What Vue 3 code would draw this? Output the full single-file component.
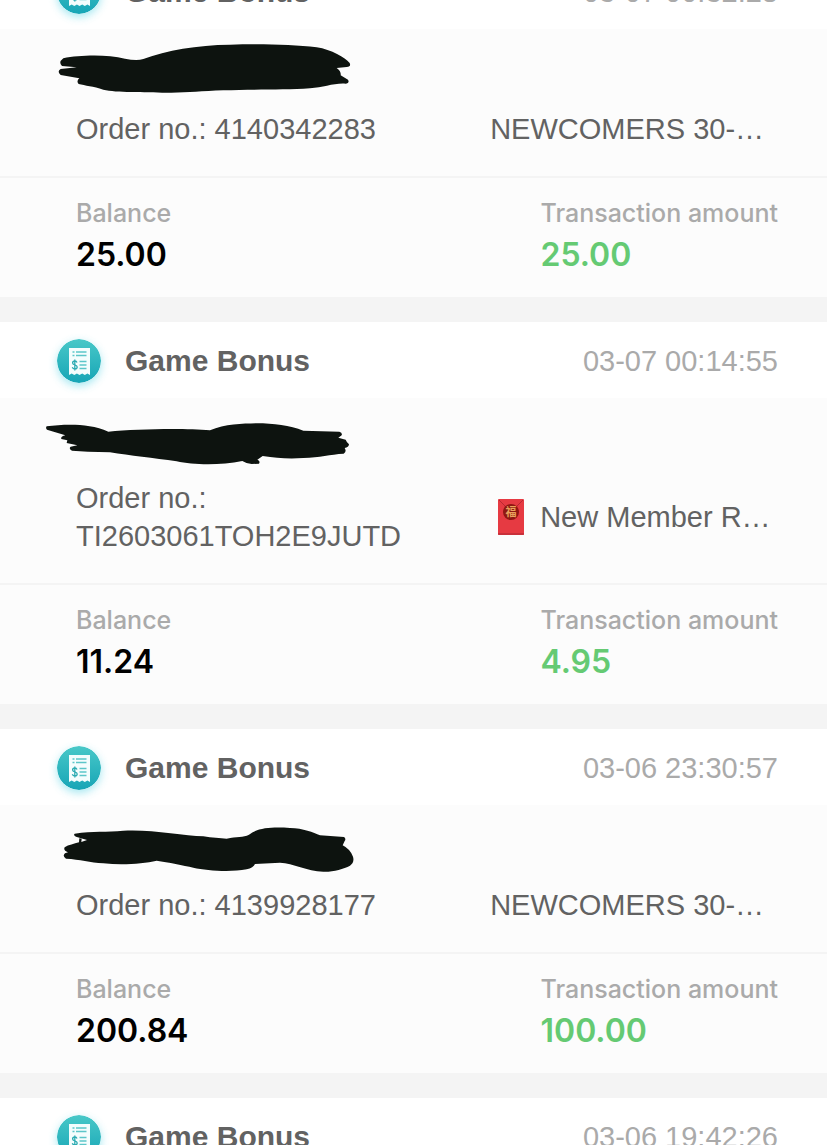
<template>
  <main class="page">
    <div class="record-list">
      <article v-for="item in records" :key="item.time" class="record">
        <header class="record-head">
          <svg class="record-icon" viewBox="0 0 44 44" aria-hidden="true">
            <defs>
              <linearGradient id="bonusFill" x1="0" y1="0" x2="0" y2="1">
                <stop offset="0" stop-color="#48c8c8" />
                <stop offset="1" stop-color="#17a5b6" />
              </linearGradient>
            </defs>
            <circle cx="22" cy="22" r="22" fill="url(#bonusFill)" />
            <path
              d="M12 9h21v27l-2.600-1.600-2.600 1.600-2.600-1.600-2.700 1.600-2.600-1.600-2.600 1.600-2.600-1.600L12 36z"
              fill="#f4fdfd"
            />
            <path
              d="M15.500 13h2M19 13h10.500M15.500 16.500h2M19 16.500h10.500M22.500 22.500h7M22.500 26h7M22.500 29.500h7"
              stroke="#5cc6c9"
              stroke-width="1.600"
            />
            <path
              d="M20 23.500c-.4-1-1.200-1.500-2.200-1.500-1.300 0-2.200.7-2.200 1.900 0 2.700 4.600 1.400 4.600 4.200 0 1.200-1 1.900-2.400 1.900-1.200 0-2.100-.6-2.500-1.700M17.800 20.500v11"
              fill="none"
              stroke="#2cabb2"
              stroke-width="1.300"
            />
          </svg>
          <h2 class="record-title">Game Bonus</h2>
          <time class="record-time">{{ item.time }}</time>
        </header>

        <template v-if="item.order">
          <section class="record-body">
            <svg class="scribble" :viewBox="item.scribble.box" aria-hidden="true">
              <path :d="item.scribble.path" />
            </svg>
            <div class="record-detail">
              <p class="order">Order no.: {{ item.order }}</p>
              <p class="promo">
                <svg v-if="item.envelope" class="envelope" viewBox="0 0 26 36" aria-hidden="true">
                  <rect width="26" height="36" rx="1" fill="#e63a42" />
                  <path d="M0 34h26v1a1 1 0 0 1-1 1H1a1 1 0 0 1-1-1z" fill="#c9303a" />
                  <path d="M1 1l6 6c3 3 9 3 12 0l6-6" fill="none" stroke="#b92832" stroke-width="1" />
                  <circle cx="13" cy="13" r="8" fill="#8f1712" />
                  <text x="13" y="17" class="envelope-seal">福</text>
                </svg>
                <span>{{ item.promo }}</span>
              </p>
            </div>
          </section>

          <dl class="record-stats">
            <div>
              <dt>Balance</dt>
              <dd>{{ item.balance }}</dd>
            </div>
            <div>
              <dt>Transaction amount</dt>
              <dd class="income">{{ item.amount }}</dd>
            </div>
          </dl>
        </template>
      </article>
    </div>
  </main>
</template>

<script setup>
const records = [
  {
    time: '03-07 00:32:28',
    order: '4140342283',
    promo: 'NEWCOMERS 30-…',
    balance: '25.00',
    amount: '25.00',
    scribble: {
      box: '132 132 930 150',
      path: 'M190 172C240 162 320 160 375 173Q410 180 430 174C500 148 590 132 690 131C790 128 880 131 950 139C995 146 1035 170 1049 186Q1054 197 1040 198L1010 201Q1024 211 1022 223L1044 236Q1050 246 1036 248C1000 246 970 260 930 262C850 268 750 264 670 268C600 270 560 276 500 275C430 273 350 275 310 266C280 256 255 254 236 249Q228 240 238 232L182 222Q170 212 182 204L230 199L186 195Q174 184 190 172Z'
    }
  },
  {
    time: '03-07 00:14:55',
    order: 'TI2603061TOH2E9JUTD',
    promo: 'New Member R…',
    envelope: true,
    balance: '11.24',
    amount: '4.95',
    scribble: {
      box: '12 -3 930 150',
      path: 'M20 34C75 28 145 24 205 50C290 42 430 39 510 46C555 27 610 26 650 25C700 25 750 31 790 47L898 50Q908 53 905 61L895 68L917 74Q920 82 927 88Q926 98 914 99Q921 110 911 116C870 118 840 128 790 129C740 133 710 128 668 123L652 134Q662 138 657 146L635 147Q618 145 607 138C540 152 460 150 410 139C340 129 270 122 210 112L144 110L96 107Q85 101 92 95L112 91L80 84L82 76L64 72Q61 65 76 61L21 44Q16 38 20 34Z'
    }
  },
  {
    time: '03-06 23:30:57',
    order: '4139928177',
    promo: 'NEWCOMERS 30-…',
    balance: '200.84',
    amount: '100.00',
    scribble: {
      box: '12 246 930 150',
      path: 'M104 284C160 275 200 280 250 275C330 270 430 290 490 292Q530 298 560 299C590 292 610 296 627 287C655 265 700 264 750 267C790 268 820 280 840 289L912 294Q919 299 914 306L908 319Q930 330 939 353Q944 370 930 380C910 390 880 399 850 398C800 396 760 373 720 371L645 375Q640 387 620 391C570 400 500 395 460 386C430 379 385 370 350 365C310 374 250 379 190 373C150 371 120 361 78 359Q66 351 75 343L84 340Q69 333 74 325C86 317 102 315 117 310L118 298L125 299L124 309L141 303L108 293Q99 289 104 284Z'
    }
  },
  { time: '03-06 19:42:26' }
];
</script>

<style>
body {
  margin: 0;
  background: #f4f4f4;
}
</style>

<style scoped>
.page {
  height: 100vh;
  overflow: hidden;
  font-family: "Liberation Sans", Arial, sans-serif;
  color: #626262;
}

/* list is scrolled part way through its first record */
.record-list {
  display: flex;
  flex-direction: column;
  gap: 25px;
  margin-top: -47px;
}

.record {
  background: #fcfcfc;
}

.record-head {
  display: flex;
  box-sizing: border-box;
  align-items: center;
  height: 76px;
  padding: 2px 49px 0 57px;
  background: #fff;
}

.record-icon {
  width: 44px;
  height: 44px;
  border-radius: 50%;
  box-shadow: 0 3px 8px rgba(60, 205, 225, 0.45);
}

.record-title {
  margin: 0 0 0 24px;
  font-size: 30px;
  line-height: 40px;
  font-weight: 700;
}

.record-time {
  margin-left: auto;
  font-size: 29px;
  line-height: 40px;
  color: #aaa;
}

.record-body {
  padding: 16px 49px 28px 76px;
  border-bottom: 2px solid #f4f4f4;
}

.scribble {
  display: block;
  width: 310px;
  height: 50px;
  margin: 0 0 15px -32px;
  overflow: visible;
  fill: #0d130f;
}

.record-detail {
  display: grid;
  grid-template-columns: 59% 41%;
  align-items: center;
  font-size: 29px;
  line-height: 38px;
}

.order,
.promo {
  margin: 0;
}

.promo {
  display: flex;
  align-items: center;
  white-space: nowrap;
}

.envelope {
  width: 26px;
  height: 36px;
  margin: 0 16px 0 8px;
}

.envelope-seal {
  font-family: "Noto Sans CJK SC", sans-serif;
  font-size: 11px;
  font-weight: 700;
  text-anchor: middle;
  fill: #e9a25c;
}

.record-stats {
  display: flex;
  justify-content: space-between;
  margin: 0;
  padding: 19px 49px 20px 76px;
  font-family: Inter, "Liberation Sans", sans-serif;
}

.record-stats dt {
  font-size: 25px;
  line-height: 32px;
  font-weight: 500;
  color: #aaa;
}

.record-stats dd {
  margin: 4px 0 0;
  font-size: 32px;
  line-height: 44px;
  font-weight: 600;
  color: #000;
}

.record-stats .income {
  color: #65ca73;
}
</style>
